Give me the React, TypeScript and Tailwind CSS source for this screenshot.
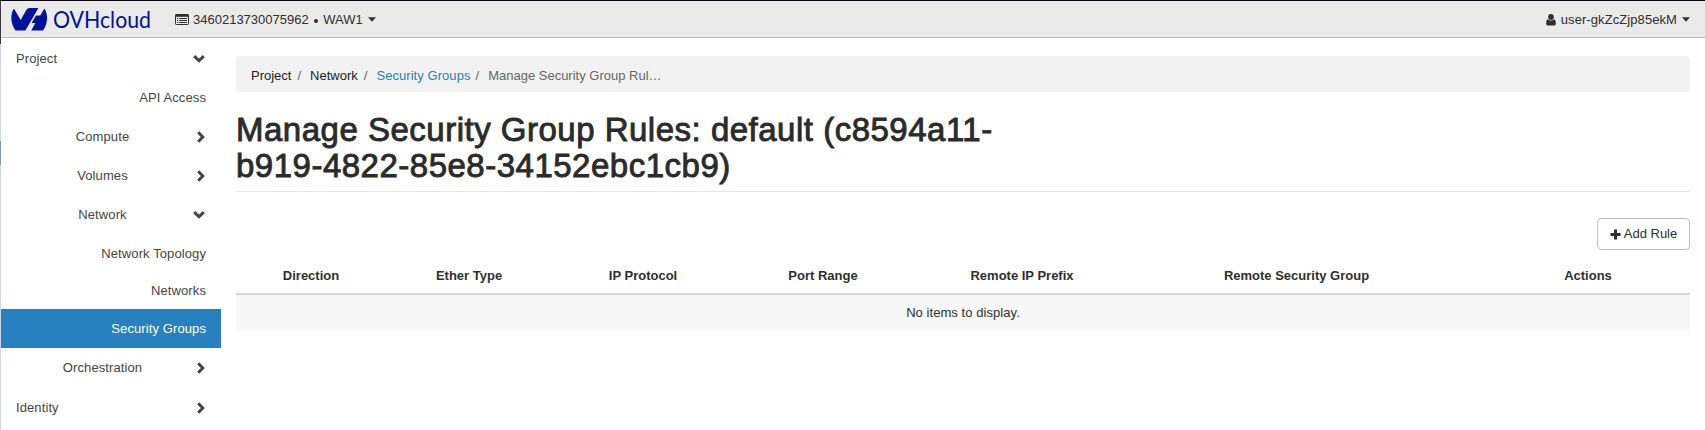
import React from "react";

const Chevron = ({ down = false }: { down?: boolean }) =>
  down ? (
    <svg width="12" height="8" viewBox="0 0 12 8" fill="none" stroke="#444" strokeWidth="3">
      <path d="M1.2 1.2 L6 5.6 L10.8 1.2" />
    </svg>
  ) : (
    <svg width="8" height="12" viewBox="0 0 8 12" fill="none" stroke="#444" strokeWidth="3">
      <path d="M1.2 1.2 L5.8 6 L1.2 10.8" />
    </svg>
  );

const Caret = () => (
  <svg width="8" height="5" viewBox="0 0 8 5" fill="#2f2f2f">
    <path d="M0 0.2H8L4 4.8Z" />
  </svg>
);

const Logo = () => (
  <div className="flex h-[34px] items-center text-[#00139a]">
    <svg width="38" height="23" viewBox="0 0 38 23" fill="currentColor">
      <path d="M2.9 0.4 L9.7 12 L15 2.4 Q16.4 0.1 18.6 0.1 H27.4 L14.4 22.4 H4.5 C0.6 17.6 -1.8 8 2.9 0.4Z" />
      <path d="M33.4 0.4 C38.2 8 35.8 17.6 32 22.4 H20.2 L24.4 15 H20.6 L25 7.4 H29.2Z" />
    </svg>
    <svg className="ml-[2px] overflow-visible" width="103" height="34" viewBox="-2 0 103 34" fill="currentColor">
      <text x="0" y="26" fontSize="23.5" textLength="98" lengthAdjust="spacingAndGlyphs" fontFamily="Lato, sans-serif">
        OVHcloud
      </text>
    </svg>
  </div>
);

type Item = { label: string; kind: "top" | "group" | "leaf"; open?: boolean; active?: boolean; h: string };

const items: Item[] = [
  { label: "Project", kind: "top", open: true, h: "h-[41px]" },
  { label: "API Access", kind: "leaf", h: "h-[37px]" },
  { label: "Compute", kind: "group", h: "h-[41px]" },
  { label: "Volumes", kind: "group", h: "h-[37px]" },
  { label: "Network", kind: "group", open: true, h: "h-[41px]" },
  { label: "Network Topology", kind: "leaf", h: "h-[37px]" },
  { label: "Networks", kind: "leaf", h: "h-[37px]" },
  { label: "Security Groups", kind: "leaf", active: true, h: "h-[39px]" },
  { label: "Orchestration", kind: "group", h: "h-[39px]" },
  { label: "Identity", kind: "top", h: "h-[41px]" },
];

const SideItem = ({ label, kind, open, active, h }: Item) => (
  <li className={`flex items-center pr-[15px] ${h} ${active ? "bg-[#2780c0] text-white" : "text-[#444]"}`}>
    {kind === "leaf" ? (
      <span className="w-full text-right">{label}</span>
    ) : (
      <>
        <span className={kind === "top" ? "w-[188px] pl-[15px]" : "w-[188px] pl-[15px] text-center"}>{label}</span>
        <span className="flex flex-1 justify-end pr-px">
          <Chevron down={open} />
        </span>
      </>
    )}
  </li>
);

const columns = [
  { label: "Direction", w: "w-[150px]" },
  { label: "Ether Type", w: "w-[166px]" },
  { label: "IP Protocol", w: "w-[182px]" },
  { label: "Port Range", w: "w-[178px]" },
  { label: "Remote IP Prefix", w: "w-[220px]" },
  { label: "Remote Security Group", w: "w-[329px]" },
  { label: "Actions", w: "w-[229px] pl-[25px]" },
];

export default function App() {
  return (
    <div className="flex h-[430px] w-[1705px] flex-col overflow-hidden border-t border-[#0c0810] bg-white font-['Liberation_Sans',Arial,sans-serif] text-[13px] leading-[18px] text-[#2f2f2f]">
      <div className="flex min-h-0 flex-1">
        <div className="flex w-px flex-col bg-[#cdd8e6]">
          <div className="h-[43px] bg-[#3a3a40]" />
          <div className="mt-[97px] h-[24px] bg-[#7f95c2]" />
        </div>
        <div className="flex flex-1 flex-col">
          <header className="flex h-[37px] items-center border-b border-[#bcbcbc] bg-[#eaeaea] pl-[10px] pr-[15px]">
            <Logo />
            <div className="ml-[21px] flex items-center pt-px">
              <svg width="14" height="11" viewBox="0 0 14 11">
                <rect x="0.5" y="0.5" width="13" height="10" rx="0.8" fill="none" stroke="#2f2f2f" />
                <path d="M0.5 0.5H13.5V2.8H0.5Z" fill="#2f2f2f" />
                <path d="M2 4.5H3.2M4.2 4.5H12M2 6.5H3.2M4.2 6.5H12M2 8.5H3.2M4.2 8.5H12" stroke="#2f2f2f" strokeWidth="1" />
              </svg>
              <span className="ml-[4px]">3460213730075962</span>
              <span className="ml-[5px] mr-[5px] mt-[3px] size-[4.5px] rounded-full bg-[#2f2f2f]" />
              <span className="mr-[5px]">WAW1</span>
              <Caret />
            </div>
            <div className="ml-auto flex items-center pt-px">
              <svg width="10" height="12" viewBox="0 0 10 12" fill="#2f2f2f">
                <ellipse cx="5" cy="3" rx="2.8" ry="3" />
                <path d="M2 5.2C0.5 5.7 0.2 7.5 0.2 9.4C0.2 10.8 1 11.5 2 11.5H8C9 11.5 9.8 10.8 9.8 9.4C9.8 7.5 9.5 5.7 8 5.2C6.5 6.9 3.5 6.9 2 5.2Z" />
              </svg>
              <span className="ml-[5px] mr-[5px] tracking-[0.08px]">user-gkZcZjp85ekM</span>
              <Caret />
            </div>
          </header>
          <div className="flex flex-1">
            <ul className="w-[220px] shrink-0 tracking-[0.1px]">
              {items.map((it) => (
                <SideItem key={it.label} {...it} />
              ))}
            </ul>
            <main className="flex-1 pl-[15px] pr-[15px] pt-[18px]">
              <nav className="flex h-[36px] items-center rounded bg-[#f2f2f2] px-[15px] pt-[3px] text-[#666]">
                <span className="text-[#222]">Project</span>
                <span className="ml-[6px] mr-[9px]">/</span>
                <span className="text-[#222]">Network</span>
                <span className="ml-[6px] mr-[9px]">/</span>
                <a className="tracking-[0.06px] text-[#2780c0]">Security Groups</a>
                <span className="ml-[5px] mr-[9px]">/</span>
                <span>Manage Security Group Rul…</span>
              </nav>
              <div className="mt-[20px] h-[80px] border-b border-[#e6e6e6]">
                <h1 className="whitespace-nowrap text-[33px] leading-[36px] tracking-[0.5px] text-[#2b2b2b] [-webkit-text-stroke:0.9px_#2b2b2b]">
                  <span className="block">Manage Security Group Rules: default (c8594a11-</span>
                  <span className="block">b919-4822-85e8-34152ebc1cb9)</span>
                </h1>
              </div>
              <div className="mt-[26px] flex justify-end">
                <button className="flex h-[32px] w-[93px] items-center justify-center gap-[3px] rounded border border-[#bfbfbf] bg-white">
                  <svg width="11" height="11" viewBox="0 0 11 11" fill="#2f2f2f">
                    <path d="M4 0.5H7V4H10.5V7H7V10.5H4V7H0.5V4H4Z" />
                  </svg>
                  <span>Add Rule</span>
                </button>
              </div>
              <table className="mt-[9px] w-full table-fixed border-separate border-spacing-0">
                <thead>
                  <tr>
                    {columns.map((c) => (
                      <th key={c.label} className={`h-[36px] border-b-2 border-[#d6d8d8] p-0 text-center font-bold ${c.w}`}>
                        {c.label}
                      </th>
                    ))}
                  </tr>
                </thead>
                <tbody>
                  <tr className="bg-[#f7f7f7]">
                    <td colSpan={7} className="h-[35px] p-0 text-center tracking-[0.06px]">
                      No items to display.
                    </td>
                  </tr>
                </tbody>
              </table>
            </main>
          </div>
        </div>
      </div>
    </div>
  );
}
